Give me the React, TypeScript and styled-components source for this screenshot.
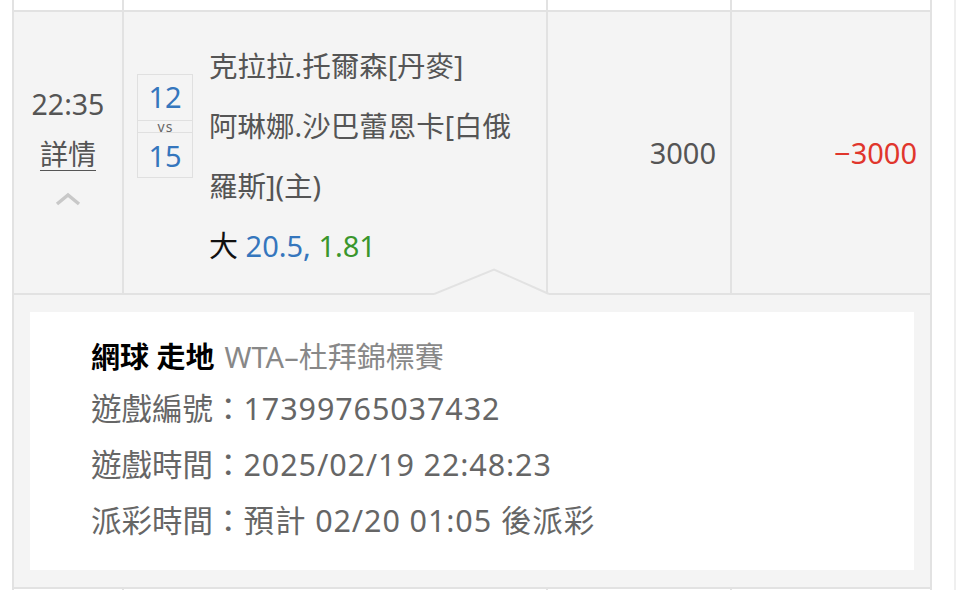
import React from 'react';
import styled, { createGlobalStyle } from 'styled-components';

const GlobalStyle = createGlobalStyle`
  html, body { margin: 0; padding: 0; background: #fff; }
  body {
    font-family: "Noto Sans", "Noto Sans CJK TC", sans-serif;
    overflow: hidden;
    -webkit-font-smoothing: antialiased;
  }
  * { box-sizing: border-box; }
`;

const LINE = '#e2e2e2';
const ROW_BG = '#f4f4f4';
const COLS = '110px 424px 184px 200px';

const Page = styled.div`
  width: 956px;
  min-height: 590px;
  padding-left: 12px;
  border-right: 2px solid #efefef;
`;

const Table = styled.div`
  width: 920px;
  border-left: 2px solid ${LINE};
`;

const Row = styled.div<{ $bg?: string; $h: number; $bottom?: boolean }>`
  display: grid;
  grid-template-columns: ${COLS};
  height: ${(p) => p.$h}px;
  background: ${(p) => p.$bg || '#fff'};
  border-bottom: ${(p) => (p.$bottom ? `2px solid ${LINE}` : 'none')};
`;

const Cell = styled.div`
  border-right: 2px solid ${LINE};
  min-width: 0;
`;

const TimeCell = styled(Cell)`
  display: flex;
  flex-direction: column;
  align-items: center;
  padding-top: 67px;
  color: #555;
`;

const Time = styled.div`
  font-size: 28.5px;
  line-height: 50px;
`;

const DetailLink = styled.a`
  font-size: 28px;
  line-height: 50px;
  color: #555;
  text-decoration: underline;
  text-underline-offset: 5px;
  text-decoration-thickness: 1px;
`;

const Chevron = styled.svg`
  margin-top: 13px;
  display: block;
`;

const TeamCell = styled(Cell)`
  display: grid;
  grid-template-columns: 56px 1fr;
  column-gap: 16px;
  align-content: start;
  padding: 24px 0 0 13px;
`;

const ScoreBox = styled.div`
  align-self: center;
  width: 56px;
  height: 104px;
  border: 1px solid #e0e0e0;
  display: grid;
  grid-template-rows: 45px 13px 44px;
  text-align: center;
`;

const Score = styled.div<{ $lh: number }>`
  font-size: 29px;
  line-height: ${(p) => p.$lh}px;
  color: #3576bd;
`;

const Vs = styled.div`
  border-top: 1px solid #e0e0e0;
  border-bottom: 1px solid #e0e0e0;
  font-size: 14px;
  letter-spacing: 1px;
  text-indent: 1px;
  line-height: 11px;
  color: #666;
`;

const Names = styled.div`
  max-width: 322px;
  font-size: 28.5px;
  line-height: 60px;
  color: #555;
`;

const Odds = styled.div`
  grid-column: 2;
  font-size: 29px;
  line-height: 60px;
  color: #111;
`;

const Tone = styled.span<{ $c: string }>`
  color: ${(p) => p.$c};
`;

const AmountCell = styled(Cell)<{ $c: string; $pr: number }>`
  display: flex;
  align-items: center;
  justify-content: flex-end;
  padding-right: ${(p) => p.$pr}px;
  font-size: 29px;
  color: ${(p) => p.$c};
`;

const DetailPanel = styled.div`
  position: relative;
  background: ${ROW_BG};
  border-right: 2px solid ${LINE};
  border-bottom: 2px solid ${LINE};
  padding: 17px 16px;
`;

const Notch = styled.svg`
  position: absolute;
  left: 420px;
  top: -27px;
  display: block;
`;

const Card = styled.div`
  background: #fff;
  height: 258px;
  padding: 22px 0 0 61px;
  color: #666;
`;

const CardTitle = styled.div`
  font-size: 29px;
  line-height: 46px;
  color: #888;
`;

const Strong = styled.b`
  color: #000;
  font-weight: 700;
  margin-right: 10px;
`;

const InfoLine = styled.div`
  font-size: 30.5px;
  line-height: 56px;
`;

const Value = styled.span`
  letter-spacing: 0.9px;
`;

export default function App() {
  return (
    <>
      <GlobalStyle />
      <Page>
        <Table>
          <Row $h={12} $bottom>
            <Cell />
            <Cell />
            <Cell />
            <Cell />
          </Row>
          <Row $h={283} $bg={ROW_BG} $bottom>
            <TimeCell>
              <Time>22:35</Time>
              <DetailLink>詳情</DetailLink>
              <Chevron width="28" height="14" viewBox="0 0 28 14">
                <polyline points="3,12 14,3 25,12" fill="none" stroke="#c8c8c8" strokeWidth="3.5" />
              </Chevron>
            </TimeCell>
            <TeamCell>
              <ScoreBox>
                <Score $lh={44}>12</Score>
                <Vs>vs</Vs>
                <Score $lh={46}>15</Score>
              </ScoreBox>
              <Names>
                克拉拉.托爾森[丹麥]
                <br />
                阿琳娜.沙巴蕾恩卡[白俄羅斯](主)
              </Names>
              <Odds>
                大 <Tone $c="#3576bd">20.5,</Tone> <Tone $c="#3a962c">1.81</Tone>
              </Odds>
            </TeamCell>
            <AmountCell $c="#555" $pr={14}>3000</AmountCell>
            <AmountCell $c="#e0362c" $pr={13}>−3000</AmountCell>
          </Row>
          <DetailPanel>
            <Notch width="118" height="29" viewBox="0 0 118 29">
              <polygon points="0,29 0,26 60,1.5 115,26 115,29" fill={ROW_BG} />
              <polyline points="0,26 60,1.5 115,26" fill="none" stroke={LINE} strokeWidth="2" />
            </Notch>
            <Card>
              <CardTitle>
                <Strong>網球 走地</Strong>WTA–杜拜錦標賽
              </CardTitle>
              <InfoLine>遊戲編號：<Value>17399765037432</Value></InfoLine>
              <InfoLine>遊戲時間：<Value>2025/02/19 22:48:23</Value></InfoLine>
              <InfoLine>派彩時間：<Value>預計 02/20 01:05 後派彩</Value></InfoLine>
            </Card>
          </DetailPanel>
          <Row $h={10}>
            <Cell />
            <Cell />
            <Cell />
            <Cell />
          </Row>
        </Table>
      </Page>
    </>
  );
}
